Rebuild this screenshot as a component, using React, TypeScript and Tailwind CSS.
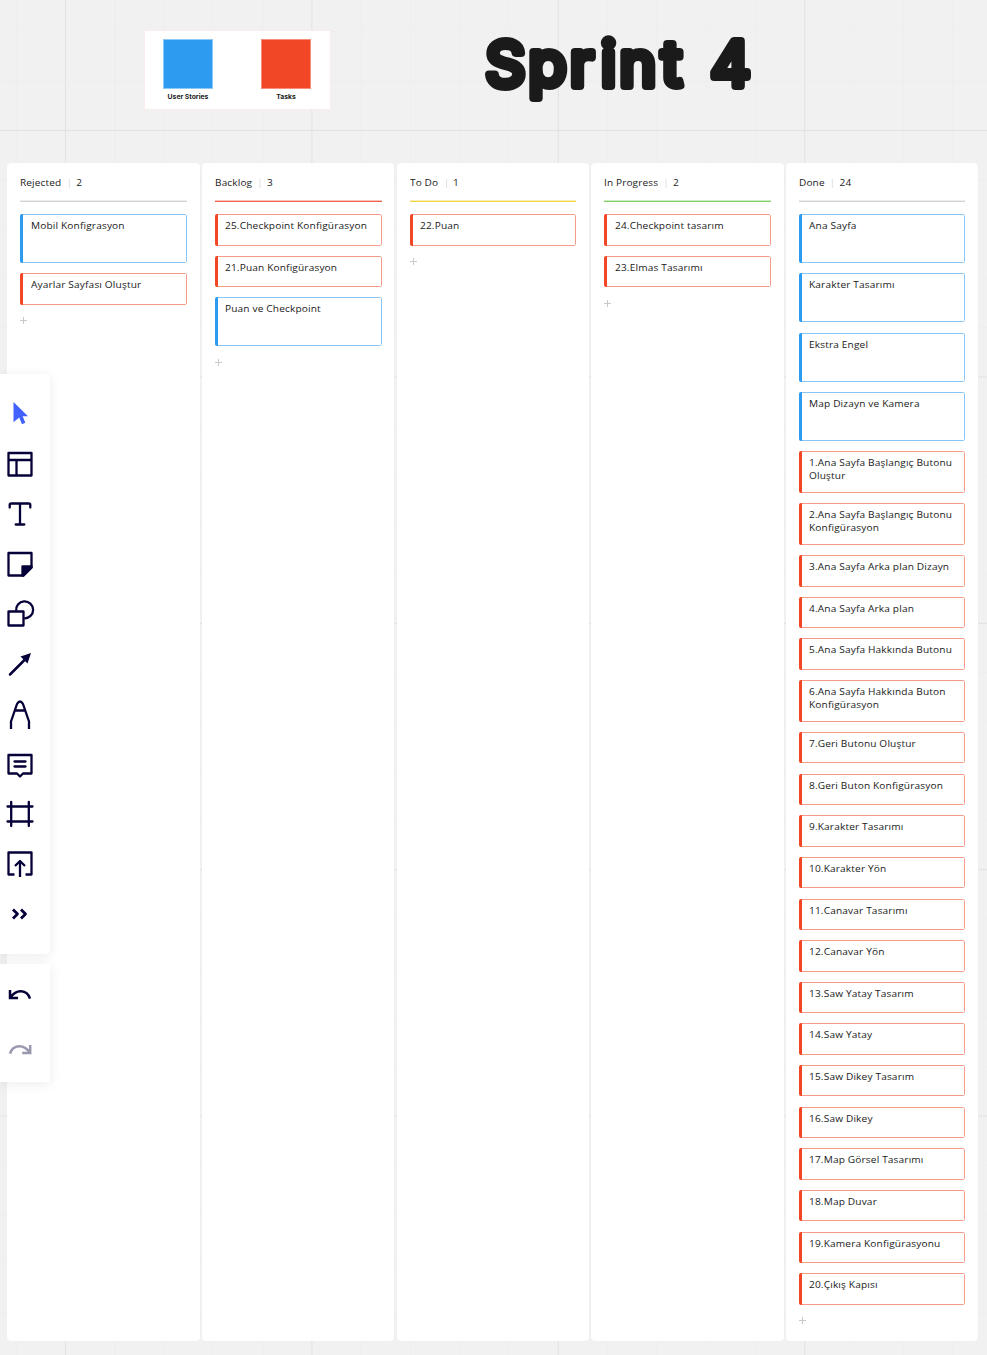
import React from "react";

type Kind = "story" | "task";
type CardData = { text: string; kind: Kind; lines?: string[] };
type ColumnData = { name: string; count: number; rule: string; cards: CardData[] };

const story = (text: string): CardData => ({ text, kind: "story" });
const task = (text: string, lines?: string[]): CardData => ({ text, kind: "task", lines });

const columns: ColumnData[] = [
  { name: "Rejected", count: 2, rule: "bg-[#d3d3d3]", cards: [story("Mobil Konfigrasyon"), task("Ayarlar Sayfası Oluştur")] },
  {
    name: "Backlog",
    count: 3,
    rule: "bg-[#f0644f]",
    cards: [task("25.Checkpoint Konfigürasyon"), task("21.Puan Konfigürasyon"), story("Puan ve Checkpoint")],
  },
  { name: "To Do", count: 1, rule: "bg-[#f2d54a]", cards: [task("22.Puan")] },
  { name: "In Progress", count: 2, rule: "bg-[#84d069]", cards: [task("24.Checkpoint tasarım"), task("23.Elmas Tasarımı")] },
  {
    name: "Done",
    count: 24,
    rule: "bg-[#d3d3d3]",
    cards: [
      story("Ana Sayfa"),
      story("Karakter Tasarımı"),
      story("Ekstra Engel"),
      story("Map Dizayn ve Kamera"),
      task("1", ["1.Ana Sayfa Başlangıç Butonu", "Oluştur"]),
      task("2", ["2.Ana Sayfa Başlangıç Butonu", "Konfigürasyon"]),
      task("3.Ana Sayfa Arka plan Dizayn"),
      task("4.Ana Sayfa Arka plan"),
      task("5.Ana Sayfa Hakkında Butonu"),
      task("6", ["6.Ana Sayfa Hakkında Buton", "Konfigürasyon"]),
      task("7.Geri Butonu Oluştur"),
      task("8.Geri Buton Konfigürasyon"),
      task("9.Karakter Tasarımı"),
      task("10.Karakter Yön"),
      task("11.Canavar Tasarımı"),
      task("12.Canavar Yön"),
      task("13.Saw Yatay Tasarım"),
      task("14.Saw Yatay"),
      task("15.Saw Dikey Tasarım"),
      task("16.Saw Dikey"),
      task("17.Map Görsel Tasarımı"),
      task("18.Map Duvar"),
      task("19.Kamera Konfigürasyonu"),
      task("20.Çıkış Kapısı"),
    ],
  },
];

function Card({ card }: { card: CardData }) {
  const isStory = card.kind === "story";
  const lines = card.lines ?? [card.text];
  const height = isStory ? "h-[49.1px]" : lines.length > 1 ? "h-[41.8px]" : "h-[31.45px]";
  const tone = isStory ? "border-[#8ac6f5]" : "border-[#f69a89]";
  const bar = isStory ? "bg-[#2d9bf0]" : "bg-[#f24726]";
  return (
    <div className={`flex w-[166.7px] shrink-0 overflow-hidden rounded-[2px] ${height}`}>
      <div className={`w-[3px] shrink-0 ${bar}`} />
      <div className={`min-w-0 flex-1 rounded-r-[2px] border border-l-0 pt-[4px] pl-[7.4px] ${tone}`}>
        {lines.map((line) => (
          <div
            key={line}
            className="w-fit origin-left scale-x-[1.063] whitespace-nowrap text-[9.5px] leading-[13px] tracking-[0.15px] text-[#1a1a1a]"
          >
            {line}
          </div>
        ))}
      </div>
    </div>
  );
}

function Column({ column }: { column: ColumnData }) {
  return (
    <section className="flex h-[1178px] w-[192.4px] shrink-0 flex-col rounded-[4px] bg-white pl-[13px] shadow-[0_0_1px_rgba(0,0,0,0.06)]">
      <header className="flex h-[37px] items-center pt-[4px] text-[9.5px] text-[#222]">
        <div className="flex origin-left scale-x-[1.06] items-center tracking-[0.12px]">
          <span>{column.name}</span>
          <span className="ml-[7px] h-[9px] w-px bg-[#e3e3e3]" />
          <span className="ml-[6px]">{column.count}</span>
        </div>
      </header>
      <div className={`h-[2px] w-[166.7px] shrink-0 border-t border-white/60 ${column.rule}`} />
      <div className="mt-[12.1px] flex flex-col gap-[10.2px]">
        {column.cards.map((card) => (
          <Card key={card.text} card={card} />
        ))}
      </div>
      <svg className="mt-[12.5px] size-[7px] shrink-0" viewBox="0 0 7 7" stroke="#c9c9c9" strokeWidth="1">
        <path d="M3.5 0v7M0 3.5h7" />
      </svg>
    </section>
  );
}

function Icon({ children, className = "" }: { children: React.ReactNode; className?: string }) {
  return (
    <svg
      className={`block h-[50px] w-[40px] shrink-0 ${className}`}
      viewBox="0 0 40 50"
      fill="none"
      stroke="#050038"
      strokeWidth="2.3"
      strokeLinejoin="round"
    >
      {children}
    </svg>
  );
}

function Toolbar() {
  return (
    <aside className="absolute top-[374px] left-0 flex w-[50px] flex-col gap-[10px]">
      <div className="flex h-[580px] flex-col rounded-r-[4px] bg-white pt-[15px] shadow-[0_2px_12px_rgba(5,0,56,0.08)]">
        <Icon>
          <path d="M13.5 13L28 27.200h-5.300l2.600 6.500-3.300 1.500-2.800-6.600-5.700 4.600z" fill="#4262ff" stroke="none" />
        </Icon>
        <Icon>
          <path d="M8.5 14h23v22.500h-23zM8.5 21h23M16.500 21v15.500" />
        </Icon>
        <Icon>
          <path d="M9.700 18.500v-2.500q0-1.500 1.500-1.500h17.600q1.500 0 1.500 1.500v2.500M20 14.500v21M15.700 35.500h8.600" strokeLinecap="round" />
        </Icon>
        <Icon>
          <path d="M8.500 14h23v14.500l-8 8h-15z" />
          <path d="M22.500 36.500v-9h9v1l-8 8z" fill="#050038" />
        </Icon>
        <Icon>
          <path d="M8.500 22.500h15v14h-15z" />
          <path d="M16.200 22a8.500 8.500 0 1 1 8 7.300" />
        </Icon>
        <Icon>
          <path d="M10 35.500L27 18.500" strokeLinecap="round" strokeWidth="2.500" />
          <path d="M31 14l-3.500 10.500-7-7z" fill="#050038" stroke="none" />
        </Icon>
        <Icon>
          <path d="M11 40v-7.500l6-17.500q3-5 6 0L29 32.500V40M15.500 21.500h9" />
        </Icon>
        <Icon>
          <path d="M8.500 16h23v18.500h-8.500l-3 3-3-3h-8.500zM14.500 22.500h11M14.500 27.500h11" strokeLinecap="round" />
        </Icon>
        <Icon>
          <path d="M11.200 13v24M28.800 13v24M7.500 17.500h25M7.500 32.500h25" strokeLinecap="round" />
        </Icon>
        <Icon>
          <path d="M14.500 35.500H8.500V13.500h23v22H25.500M20 38V22.500M15 27l5-5 5 5" />
        </Icon>
        <Icon>
          <path d="M13 20.500l4.500 4.500-4.500 4.500M21 20.500l4.500 4.500-4.500 4.500" strokeWidth="2.800" />
        </Icon>
      </div>
      <div className="flex h-[118px] flex-col bg-white pt-[6px] shadow-[0_2px_12px_rgba(5,0,56,0.08)]">
        <Icon>
          <path d="M10 20v8h8M10.500 27.500C16 19 27 19 30 28.700" strokeWidth="2.500" strokeLinejoin="miter" />
        </Icon>
        <Icon className="mt-[5px] opacity-40">
          <path d="M30.200 20v8h-8M29.700 27.500C24 19 13 19 10 28.700" strokeWidth="2.500" strokeLinejoin="miter" />
        </Icon>
      </div>
    </aside>
  );
}

function Legend({ label, swatch }: { label: string; swatch: string }) {
  return (
    <div className="flex w-[50px] flex-col items-center">
      <div className={`h-[50px] w-[50px] border ${swatch}`} />
      <span className="mt-[3px] whitespace-nowrap text-[6.8px] leading-[10px] font-bold text-[#1a1a1a]">{label}</span>
    </div>
  );
}

function GridLines() {
  const step = 49.28;
  const xs = Array.from({ length: 20 }, (_, i) => ({ at: 65.5 + (i - 1) * step, major: (i - 1) % 5 === 0 }));
  const ys = Array.from({ length: 28 }, (_, i) => ({ at: 130.5 + (i - 2) * step, major: (i - 2) % 5 === 0 }));
  return (
    <svg className="absolute inset-0 h-[1355px] w-[987px]" viewBox="0 0 987 1355">
      {xs.map(({ at, major }) => (
        <path key={at} d={`M${at} 0V1355`} stroke={major ? "#e2e2e2" : "#eeeeee"} />
      ))}
      {ys.map(({ at, major }) => (
        <path key={at} d={`M0 ${at}H987`} stroke={major ? "#e2e2e2" : "#eeeeee"} />
      ))}
    </svg>
  );
}

export default function App() {
  return (
    <div className="relative h-[1355px] w-[987px] overflow-hidden bg-[#f1f1f1] font-['Open_Sans',sans-serif]">
      <GridLines />
      <main className="relative">
        <div className="flex h-[163px] items-start">
          <div className="mt-[30px] ml-[144px] flex h-[80px] w-[187px] gap-[48px] border border-[#fbeceb] bg-white pt-[8px] pl-[18px] font-['Inter',sans-serif]">
            <Legend label="User Stories" swatch="border-[#8ec8f6] bg-[#2d9bf0]" />
            <Legend label="Tasks" swatch="border-[#f88d79] bg-[#f24726]" />
          </div>
          <h1 className="ml-[149px]">
            <svg className="block h-[120px] w-[280px]" viewBox="480 0 280 120" aria-label="Sprint 4">
              <g
                fontFamily="Inter, sans-serif"
                fontWeight="400"
                fill="#1a1a1a"
                stroke="#1a1a1a"
                strokeWidth="8"
                strokeLinejoin="round"
              >
                <text x="485.5 528.5 570 601 619.5 661.500 690 710.5" y="86" fontSize="62">
                  Sprint 4
                </text>
              </g>
            </svg>
          </h1>
        </div>
        <div className="flex gap-[2.200px] pl-[7.400px]">
          {columns.map((column) => (
            <Column key={column.name} column={column} />
          ))}
        </div>
      </main>
      <Toolbar />
    </div>
  );
}
